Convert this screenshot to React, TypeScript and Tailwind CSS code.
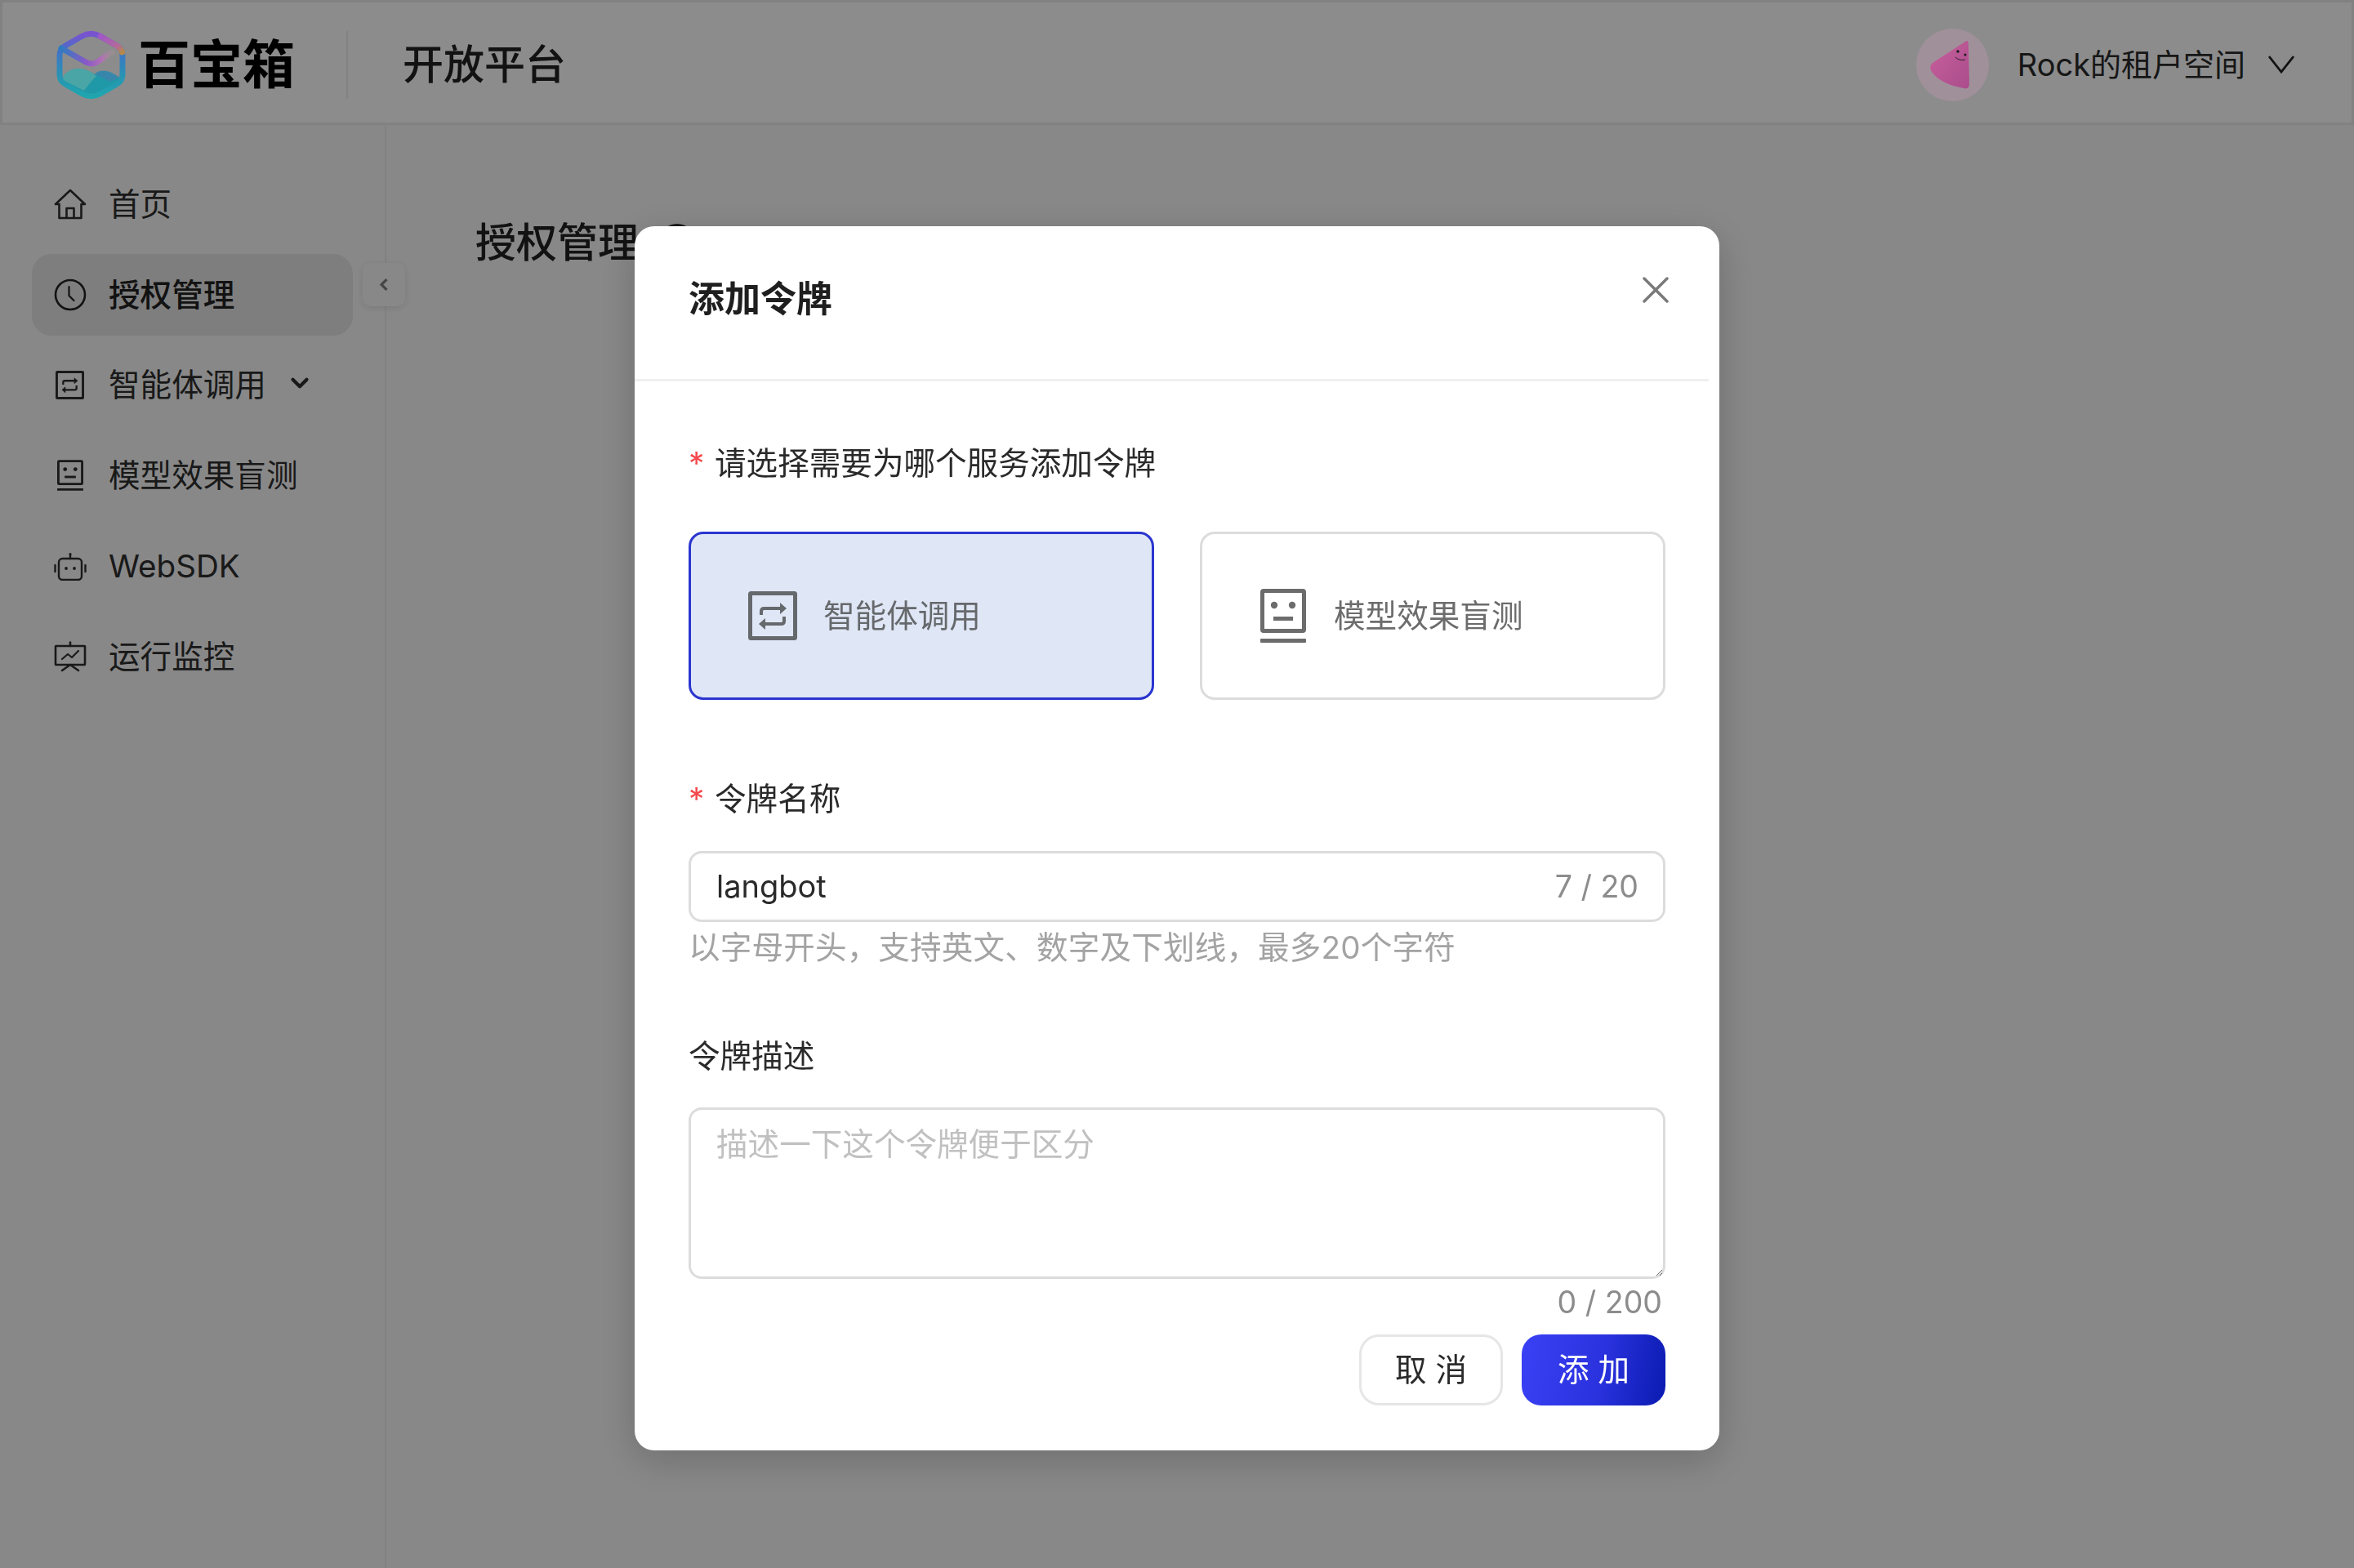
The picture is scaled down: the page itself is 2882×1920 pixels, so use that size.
import { ChevronDown, X } from 'lucide-react'

const font = { fontFamily: 'Inter, "Noto Sans CJK SC", sans-serif' }

function Logo() {
  return (
    <svg viewBox="0 0 85 89" className="relative z-50 w-[85px] h-[89px] shrink-0" fill="none">
      <defs>
        <linearGradient id="ring" x1="0" y1="0" x2="0" y2="1">
          <stop offset="0" stopColor="#7a52d0" />
          <stop offset="0.3" stopColor="#3f74c6" />
          <stop offset="0.65" stopColor="#2a92b4" />
          <stop offset="1" stopColor="#1fa6ae" />
        </linearGradient>
        <linearGradient id="ringTop" x1="0" y1="0" x2="1" y2="1">
          <stop offset="0" stopColor="#a058c8" />
          <stop offset="0.7" stopColor="#b46a98" />
          <stop offset="1" stopColor="#b48a48" />
        </linearGradient>
        <linearGradient id="flap" x1="0" y1="0" x2="1" y2="0">
          <stop offset="0" stopColor="#2f7cc0" />
          <stop offset="0.5" stopColor="#8a58c8" />
          <stop offset="0.8" stopColor="#b070b4" />
          <stop offset="1" stopColor="#a89098" stopOpacity="0.4" />
        </linearGradient>
      </defs>
      <path d="M31 9.5 Q42.5 3 54 9.5 L74 21 Q81 25 81 33 V56 Q81 64 74 68 L54 79.5 Q42.5 86 31 79.5 L11 68 Q4 64 4 56 V33 Q4 25 11 21 Z" stroke="url(#ring)" strokeWidth="7" />
      <path d="M54 9.5 L74 21 Q79 24 80.5 29" stroke="url(#ringTop)" strokeWidth="7" strokeLinecap="round" />
      <path d="M6 24 L36 41 Q43 45 50 41 L68 29" stroke="url(#flap)" strokeWidth="7" strokeLinecap="round" />
      <path d="M8 60 Q8 63 12 65.5 L33 77 Q42.5 82 52 77 L73 65.5 Q77 63 77 60 Q66 52 60 52 Q52 51 47 56 Q36 49 26 49 Q14 50 8 60 Z" fill="#1f98a8" />
      <path d="M8 60 Q12 50 26 49 Q38 49 49 58 Q42 65 34 76 L12 65 Q8 63 8 60 Z" fill="#4aa6a6" />
      <path d="M47 56 Q52 51 60 52 Q66 52 77 60 L66 65 Q58 60 47 56 Z" fill="#3886ac" />
    </svg>
  )
}

function Avatar() {
  return (
    <svg viewBox="0 0 89 89" className="relative z-50 w-[89px] h-[89px] shrink-0">
      <defs>
        <linearGradient id="cone" x1="0" y1="0" x2="1" y2="1">
          <stop offset="0" stopColor="#c8609c" />
          <stop offset="1" stopColor="#aa4c8c" />
        </linearGradient>
      </defs>
      <circle cx="44.5" cy="44.5" r="44.5" fill="#a0909a" />
      <path d="M60 16 Q64 13 64 19 L65 68 Q65 75 58 73 Q30 68 19 53 Q15 47 20 42 Z" fill="url(#cone)" />
      <circle cx="51" cy="28" r="1.7" fill="#1a1a1a" />
      <circle cx="60" cy="32" r="1.5" fill="#1a1a1a" />
      <path d="M48 35 Q53 40 60 38" stroke="#1a1a1a" strokeWidth="0.9" fill="none" />
    </svg>
  )
}

function HomeIcon() {
  return (
    <svg viewBox="0 0 40 38" className="w-10 h-[38px]" fill="none" stroke="currentColor" strokeWidth="2.6" strokeLinejoin="round">
      <path d="M20 2 L2 19 H6.5 V36 H33.5 V19 H38 Z" />
      <path d="M15.5 36 V24 H24.5 V36" />
    </svg>
  )
}

function ClockIcon() {
  return (
    <svg viewBox="0 0 40 40" className="w-10 h-10" fill="none" stroke="currentColor" strokeWidth="2.6" strokeLinecap="round" strokeLinejoin="round">
      <circle cx="20" cy="20" r="18" />
      <path d="M18.5 10 V21 L24.5 27" strokeWidth="2.2" />
    </svg>
  )
}

function SwapIcon({ className }: { className: string }) {
  return (
    <svg viewBox="0 0 60 60" className={className} fill="none" stroke="currentColor" strokeWidth="5" strokeLinejoin="round">
      <rect x="2.5" y="2.5" width="55" height="55" rx="1" />
      <path d="M16 29 V24.5 Q16 21 19.5 21 H40" strokeWidth="4" />
      <path d="M39 14 L47 21 L39 28 Z" fill="currentColor" stroke="none" />
      <path d="M44 31 V36.5 Q44 40 40.5 40 H20" strokeWidth="4" />
      <path d="M21 33 L13 40 L21 47 Z" fill="currentColor" stroke="none" />
    </svg>
  )
}

function FaceIcon({ className }: { className: string }) {
  return (
    <svg viewBox="0 0 56 66" className={className} fill="none">
      <rect x="2.5" y="2.5" width="51" height="49" rx="1.5" stroke="currentColor" strokeWidth="5" />
      <circle cx="17" cy="20" r="4.2" fill="currentColor" />
      <circle cx="39" cy="20" r="4.2" fill="currentColor" />
      <rect x="16" y="34" width="24" height="5" fill="currentColor" />
      <rect x="0" y="61" width="56" height="5" rx="1" fill="currentColor" />
    </svg>
  )
}

function RobotIcon() {
  return (
    <svg viewBox="0 0 40 35" className="w-10 h-[35px]" fill="none" stroke="currentColor" strokeWidth="2.4" strokeLinecap="round">
      <rect x="6" y="8" width="28" height="26" rx="4.5" />
      <path d="M20 8 V3" />
      <circle cx="20" cy="2.5" r="1.6" fill="currentColor" stroke="none" />
      <path d="M1.5 16 V24 M38.5 16 V24" />
      <circle cx="15" cy="20" r="1.9" fill="currentColor" stroke="none" />
      <circle cx="25" cy="20" r="1.9" fill="currentColor" stroke="none" />
    </svg>
  )
}

function MonitorIcon() {
  return (
    <svg viewBox="0 0 40 38" className="w-10 h-[38px]" fill="none" stroke="currentColor" strokeWidth="2.6" strokeLinecap="round" strokeLinejoin="round">
      <rect x="2" y="6" width="36" height="23" rx="0.5" />
      <path d="M20 1.5 V6 M20 29 L10 36 M20 29 L30 36" />
      <path d="M10 22 L17 16 L22 20 L30 12" strokeWidth="2.2" />
    </svg>
  )
}

const menu = [
  { label: '首页', icon: <HomeIcon /> },
  { label: '授权管理', icon: <ClockIcon />, active: true },
  { label: '智能体调用', icon: <SwapIcon className="w-[35px] h-[35px] ml-[2px]" />, arrow: true },
  { label: '模型效果盲测', icon: <FaceIcon className="w-8 h-[38px] ml-1" /> },
  { label: 'WebSDK', icon: <RobotIcon /> },
  { label: '运行监控', icon: <MonitorIcon /> },
]

export default function App() {
  return (
    <div style={font} className="h-screen overflow-hidden flex flex-col bg-[#f8f8f8] text-[#2a2a2a]">
      <header className="h-[153px] shrink-0 bg-white border-t-[3px] border-x-[3px] border-b-[3px] border-[#ececec] flex items-center justify-between pt-[5px] pl-[66px] pr-[70px]">
        <div className="flex items-center">
          <Logo />
          <span className="ml-[15px] text-[64px] leading-none font-bold text-black">百宝箱</span>
          <div className="ml-[63px] w-[2px] h-[83px] bg-[#ececec]" />
          <span className="ml-[67px] text-[50px] leading-none font-medium text-[#222]">开放平台</span>
        </div>
        <div className="flex items-center">
          <Avatar />
          <span className="ml-[35px] text-[38px] leading-none text-[#2a2a2a]">Rock的租户空间</span>
          <svg viewBox="0 0 32 22" className="ml-[28px] w-[32px] h-[22px] text-[#222]" fill="none" stroke="currentColor" strokeWidth="2.8">
            <path d="M1 1 L16 20 L31 1" />
          </svg>
        </div>
      </header>

      <div className="flex-1 flex min-h-0">
        <aside className="relative w-[473px] shrink-0 border-r-[2px] border-[#ececec] pt-[47px] px-[39px] flex flex-col gap-[10.8px]">
          {menu.map((m) => (
            <div
              key={m.label}
              className={`h-[100px] shrink-0 rounded-[24px] pl-[27px] flex items-center text-[38.6px] leading-none ${
                m.active ? 'bg-[#e6e6e6] font-medium text-[#222]' : 'text-[#2f2f2f]'
              }`}
            >
              <span className="w-10 flex items-center justify-start">{m.icon}</span>
              <span className="ml-[27px]">{m.label}</span>
              {m.arrow && <ChevronDown className="ml-[24px] -mt-[5px] w-[34px] h-[34px]" strokeWidth={3} />}
            </div>
          ))}
          <button className="absolute left-[444px] top-[169px] w-[52px] h-[53px] rounded-[10px] bg-[#f8f8f8] shadow-[0_2px_8px_rgba(0,0,0,0.1)] flex items-center justify-center text-[#808080]">
            <svg viewBox="0 0 10 15" className="w-[10px] h-[15px]" fill="none" stroke="currentColor" strokeWidth="3.2">
              <path d="M8.5 1 L2 7.5 L8.5 14" />
            </svg>
          </button>
        </aside>

        <main className="flex-1 pl-[109px] pt-[118px]">
          <div className="flex items-center">
            <h1 className="text-[50px] leading-[52px] font-medium text-[#222]">授权管理</h1>
            <span className="ml-[24px] w-[46px] h-[46px] rounded-full border-[4px] border-[#333]" />
          </div>
        </main>
      </div>

      {/* dialog */}
      <div className="fixed inset-0 z-40 bg-black/45 flex justify-center items-start pt-[277px]">
        <div className="w-[1328px] h-[1499px] bg-white rounded-[24px] shadow-[0_12px_48px_rgba(0,0,0,0.2)]">
          <div className="h-[190px] mr-[13px] border-b-[3px] border-[#f0f0f0] pl-[66px] pr-[47px] pt-[67px] flex items-start justify-between">
            <h2 className="text-[44px] leading-[44px] font-semibold text-[#1f1f1f]">添加令牌</h2>
            <button className="-mt-[17px] -mr-[10px] text-[#7a7a7a]">
              <X className="w-[56px] h-[56px]" strokeWidth={1.5} />
            </button>
          </div>

          <div className="px-[66px] pt-[81px]">
            <div className="flex items-center text-[38.6px] leading-[38px] text-[#2a2a2a]">
              <span className="w-[32px] text-[#f5484d]">*</span>
              <span>请选择需要为哪个服务添加令牌</span>
            </div>

            <div className="mt-[65px] grid grid-cols-2 gap-[56px]">
              <div className="h-[206px] rounded-[18px] border-[3px] border-[#2a35d0] bg-[#dfe6f5] flex items-center pl-[70px] text-[#66696c]">
                <SwapIcon className="w-[60px] h-[60px]" />
                <span className="ml-[32px] text-[38.6px] leading-none">智能体调用</span>
              </div>
              <div className="h-[206px] rounded-[18px] border-[3px] border-[#dcdcdc] bg-white flex items-center pl-[71px] text-[#6c6c6c]">
                <FaceIcon className="w-[56px] h-[66px]" />
                <span className="ml-[34px] text-[38.6px] leading-none">模型效果盲测</span>
              </div>
            </div>

            <div className="mt-[102px] flex items-center text-[38.6px] leading-[38px] text-[#2a2a2a]">
              <span className="w-[32px] text-[#f5484d]">*</span>
              <span>令牌名称</span>
            </div>

            <div className="mt-[45px] h-[87px] rounded-[16px] border-[3px] border-[#dcdcdc] flex items-center justify-between pl-[31px] pr-[30px]">
              <input readOnly value="langbot" className="flex-1 min-w-0 outline-none text-[38px] text-[#2a2a2a]" />
              <span className="text-[37.5px] leading-none text-[#8c8c8c]">7 / 20</span>
            </div>

            <p className="mt-[12px] text-[38.6px] leading-[38px] tracking-[0.15px] text-[#a3a3a3]">以字母开头，支持英文、数字及下划线，最多20个字符</p>

            <div className="mt-[95px] text-[38.6px] leading-[38px] text-[#2a2a2a]">令牌描述</div>

            <textarea
              readOnly
              placeholder="描述一下这个令牌便于区分"
              className="mt-[44px] block w-full h-[210px] rounded-[16px] border-[3px] border-[#dcdcdc] px-[31px] py-[17px] outline-none text-[38.6px] leading-[50px] placeholder:text-[#c0c0c0]"
            />

            <div className="mt-[10px] pr-[4px] text-right text-[37.5px] leading-[38px] text-[#8c8c8c]">0 / 200</div>

            <div className="mt-[20px] flex justify-end gap-[23px]">
              <button className="w-[176px] h-[87px] rounded-[24px] border-[3px] border-[#e6e6e6] bg-white text-[38.6px] text-[#2a2a2a]">取 消</button>
              <button className="w-[176px] h-[87px] rounded-[24px] bg-[linear-gradient(100deg,#3a41f5,#2a32de_55%,#0a1bb0)] text-[38.6px] text-white">添 加</button>
            </div>
          </div>
        </div>
      </div>
    </div>
  )
}
